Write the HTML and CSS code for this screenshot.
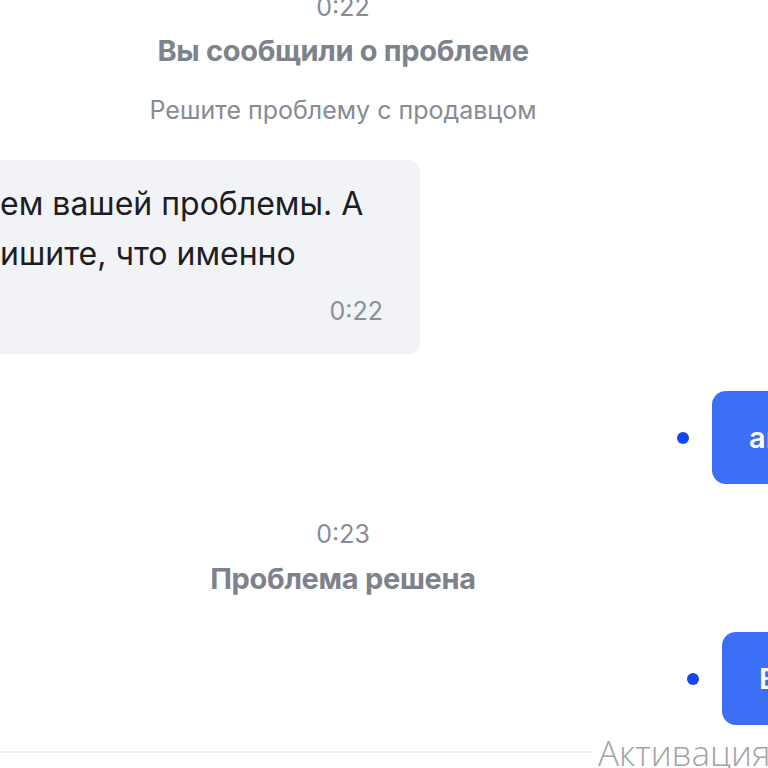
FILE: index.html
```html
<!DOCTYPE html>
<html lang="ru">
<head>
<meta charset="utf-8">
<link rel="stylesheet" href="styles.css">
</head>
<body>
<div class="chat">
  <div class="system first">
    <div class="sys-time">0:22</div>
    <div class="sys-title">Вы сообщили о проблеме</div>
    <div class="sys-sub">Решите проблему с продавцом</div>
  </div>
  <div class="row in">
    <div class="bubble gray">
      <div class="text">ем вашей проблемы. А<br>ишите, что именно</div>
      <div class="time">0:22</div>
    </div>
  </div>
  <div class="row out one">
    <span class="dot"></span>
    <div class="bubble blue">ага, спасибо</div>
  </div>
  <div class="system second">
    <div class="sys-time">0:23</div>
    <div class="sys-title">Проблема решена</div>
  </div>
  <div class="row out two">
    <span class="dot"></span>
    <div class="bubble blue">Всё хорошо</div>
  </div>
</div>
<div class="footer-line"></div>
<div class="watermark">Активация Windows</div>
</body>
</html>
```
FILE: styles.css
```css
html, body {
  margin: 0;
  padding: 0;
  width: 768px;
  height: 768px;
  overflow: hidden;
  background: #ffffff;
  font-family: Inter, "Noto Sans", sans-serif;
}
body { position: relative; }

.chat {
  margin-left: -200px;
  width: 1086px;
  display: flex;
  flex-direction: column;
}

.system {
  display: flex;
  flex-direction: column;
  align-items: center;
  color: #7d828c;
}
.system.first { margin-top: -9px; }
.system.second { margin-top: 34px; }

.sys-time {
  font-size: 25px;
  line-height: 32px;
  color: #868b94;
}
.sys-title {
  margin-top: 10px;
  font-size: 29px;
  font-weight: 700;
  line-height: 36px;
  letter-spacing: -0.3px;
}
.system.second .sys-title { margin-top: 11px; }
.sys-sub {
  margin-top: 26px;
  font-size: 25px;
  line-height: 30px;
  color: #868b94;
}

.row { display: flex; align-items: center; }
.row.in { margin-top: 35px; }
.row.out { justify-content: flex-end; }
.row.one { margin-top: 37px; }
.row.one .bubble { width: 174px; }
.row.two { margin-top: 35px; }
.row.two .bubble { width: 164px; }

.bubble { border-radius: 14px; box-sizing: border-box; }

.bubble.gray {
  margin-left: 170px;
  width: 450px;
  padding: 19px 37px 28px 30px;
  background: #f2f3f6;
  border-radius: 12px;
}
.bubble.gray .text {
  font-size: 32px;
  line-height: 50px;
  color: #1c1e22;
  white-space: nowrap;
}
.bubble.gray .time {
  margin-top: 17px;
  text-align: right;
  font-size: 25px;
  line-height: 30px;
  color: #8a8f98;
}

.bubble.blue {
  background: #3c6ff6;
  color: #ffffff;
  font-size: 29px;
  font-weight: 600;
  line-height: 37px;
  padding: 28px 37px;
  white-space: nowrap;
  overflow: hidden;
}

.dot {
  width: 12px;
  height: 12px;
  border-radius: 50%;
  background: #1547f0;
  margin-right: 23px;
  flex: none;
}

.footer-line {
  position: absolute;
  left: 0;
  right: 0;
  top: 751px;
  height: 2px;
  background: #eeeff1;
}

.watermark {
  position: absolute;
  left: 592px;
  top: 730px;
  padding-left: 6px;
  background: #ffffff;
  font-family: "Open Sans", sans-serif;
  font-weight: 300;
  font-size: 35px;
  line-height: 46px;
  color: #a3a3a3;
  white-space: nowrap;
}
```
